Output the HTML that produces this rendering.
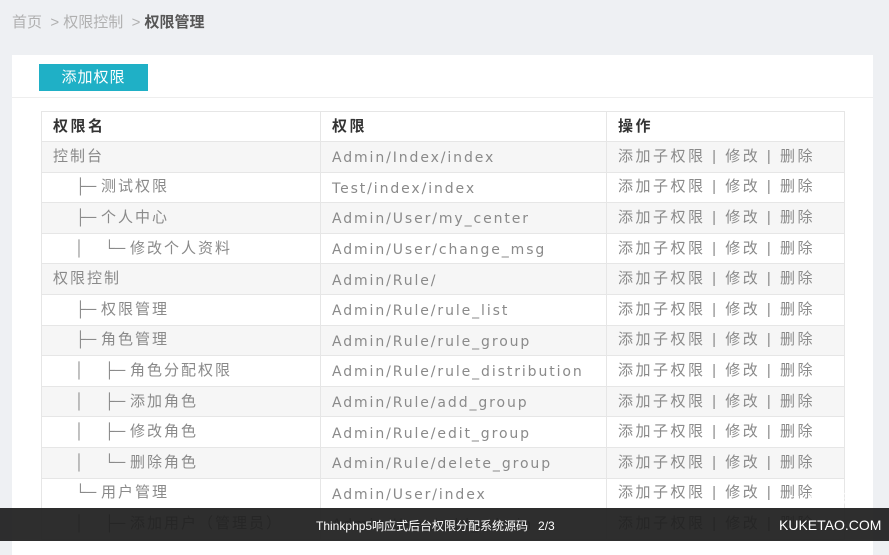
<!DOCTYPE html><html><head><meta charset="utf-8"><style>
*{margin:0;padding:0;box-sizing:border-box}
body{width:889px;height:541px;overflow:hidden;background:#eef0f3;font-family:"Liberation Sans","Noto Sans CJK SC",sans-serif;position:relative}
.bc{position:absolute;left:12px;top:13px;font-size:15px;color:#b0b0b0;line-height:20px}
.bc b{color:#555;font-weight:bold}
.panel{position:absolute;left:12px;top:55px;width:861px;height:500px;background:#fff}
.btn{position:absolute;left:27px;top:9px;width:109px;height:27px;background:#1fb0c6;color:#fff;font-size:15px;line-height:27px;text-align:center;letter-spacing:1px}
.sep{position:absolute;left:0;top:42px;width:861px;height:1px;background:#eee}
table{position:absolute;left:29px;top:56px;border-collapse:collapse;width:804px;font-size:15px;color:#8a8a8a;table-layout:fixed}
td,th{border:1px solid #e6e6e6;height:30.6px;padding:0 11px;text-align:left;white-space:nowrap;line-height:20px;vertical-align:middle;letter-spacing:2.5px;overflow:hidden}
td:first-child{letter-spacing:2px}
th{color:#333;font-weight:bold;height:30px}
tr:nth-child(even) td{background:#f6f6f6}
td:nth-child(2){font-family:"DejaVu Sans",sans-serif;font-size:14px;letter-spacing:1.9px;padding-top:3px}
.i{display:inline-block;letter-spacing:0}
.bar{position:absolute;left:0;top:508px;width:889px;height:33px;background:rgba(30,30,30,.93);color:#fff;font-size:12px}
</style></head><body>
<div class="bc">首页 &nbsp;&gt; 权限控制 &nbsp;&gt; <b>权限管理</b></div>
<div class="panel"><div class="btn">添加权限</div><div class="sep"></div>
<table>
<tr><th style="width:279px">权限名</th><th style="width:286px">权限</th><th>操作</th></tr>
<tr><td>控制台</td><td>Admin/Index/index</td><td>添加子权限 | 修改 | 删除</td></tr>
<tr><td><span class="i" style="width:22px"></span><span class="i" style="width:26px">├─</span>测试权限</td><td>Test/index/index</td><td>添加子权限 | 修改 | 删除</td></tr>
<tr><td><span class="i" style="width:22px"></span><span class="i" style="width:26px">├─</span>个人中心</td><td>Admin/User/my_center</td><td>添加子权限 | 修改 | 删除</td></tr>
<tr><td><span class="i" style="width:22px"></span><span class="i" style="width:29px">│</span><span class="i" style="width:26px">└─</span>修改个人资料</td><td>Admin/User/change_msg</td><td>添加子权限 | 修改 | 删除</td></tr>
<tr><td>权限控制</td><td>Admin/Rule/</td><td>添加子权限 | 修改 | 删除</td></tr>
<tr><td><span class="i" style="width:22px"></span><span class="i" style="width:26px">├─</span>权限管理</td><td>Admin/Rule/rule_list</td><td>添加子权限 | 修改 | 删除</td></tr>
<tr><td><span class="i" style="width:22px"></span><span class="i" style="width:26px">├─</span>角色管理</td><td>Admin/Rule/rule_group</td><td>添加子权限 | 修改 | 删除</td></tr>
<tr><td><span class="i" style="width:22px"></span><span class="i" style="width:29px">│</span><span class="i" style="width:26px">├─</span>角色分配权限</td><td>Admin/Rule/rule_distribution</td><td>添加子权限 | 修改 | 删除</td></tr>
<tr><td><span class="i" style="width:22px"></span><span class="i" style="width:29px">│</span><span class="i" style="width:26px">├─</span>添加角色</td><td>Admin/Rule/add_group</td><td>添加子权限 | 修改 | 删除</td></tr>
<tr><td><span class="i" style="width:22px"></span><span class="i" style="width:29px">│</span><span class="i" style="width:26px">├─</span>修改角色</td><td>Admin/Rule/edit_group</td><td>添加子权限 | 修改 | 删除</td></tr>
<tr><td><span class="i" style="width:22px"></span><span class="i" style="width:29px">│</span><span class="i" style="width:26px">└─</span>删除角色</td><td>Admin/Rule/delete_group</td><td>添加子权限 | 修改 | 删除</td></tr>
<tr><td><span class="i" style="width:22px"></span><span class="i" style="width:26px">└─</span>用户管理</td><td>Admin/User/index</td><td>添加子权限 | 修改 | 删除</td></tr>
<tr><td><span class="i" style="width:22px"></span><span class="i" style="width:29px">│</span><span class="i" style="width:26px">├─</span>添加用户（管理员）</td><td>Admin/User/add_admin</td><td>添加子权限 | 修改 | 删除</td></tr>
</table></div>
<div style="position:absolute;left:790px;top:489px;color:#fff;font-size:15px;opacity:.85;letter-spacing:2px">□ 酷客淘</div>
<div class="bar"><span style="position:absolute;left:316px;top:9px">Thinkphp5响应式后台权限分配系统源码 &nbsp;&nbsp;2/3</span><span style="position:absolute;left:779px;top:9px;font-size:14px">KUKETAO.COM</span></div>
</body></html>
